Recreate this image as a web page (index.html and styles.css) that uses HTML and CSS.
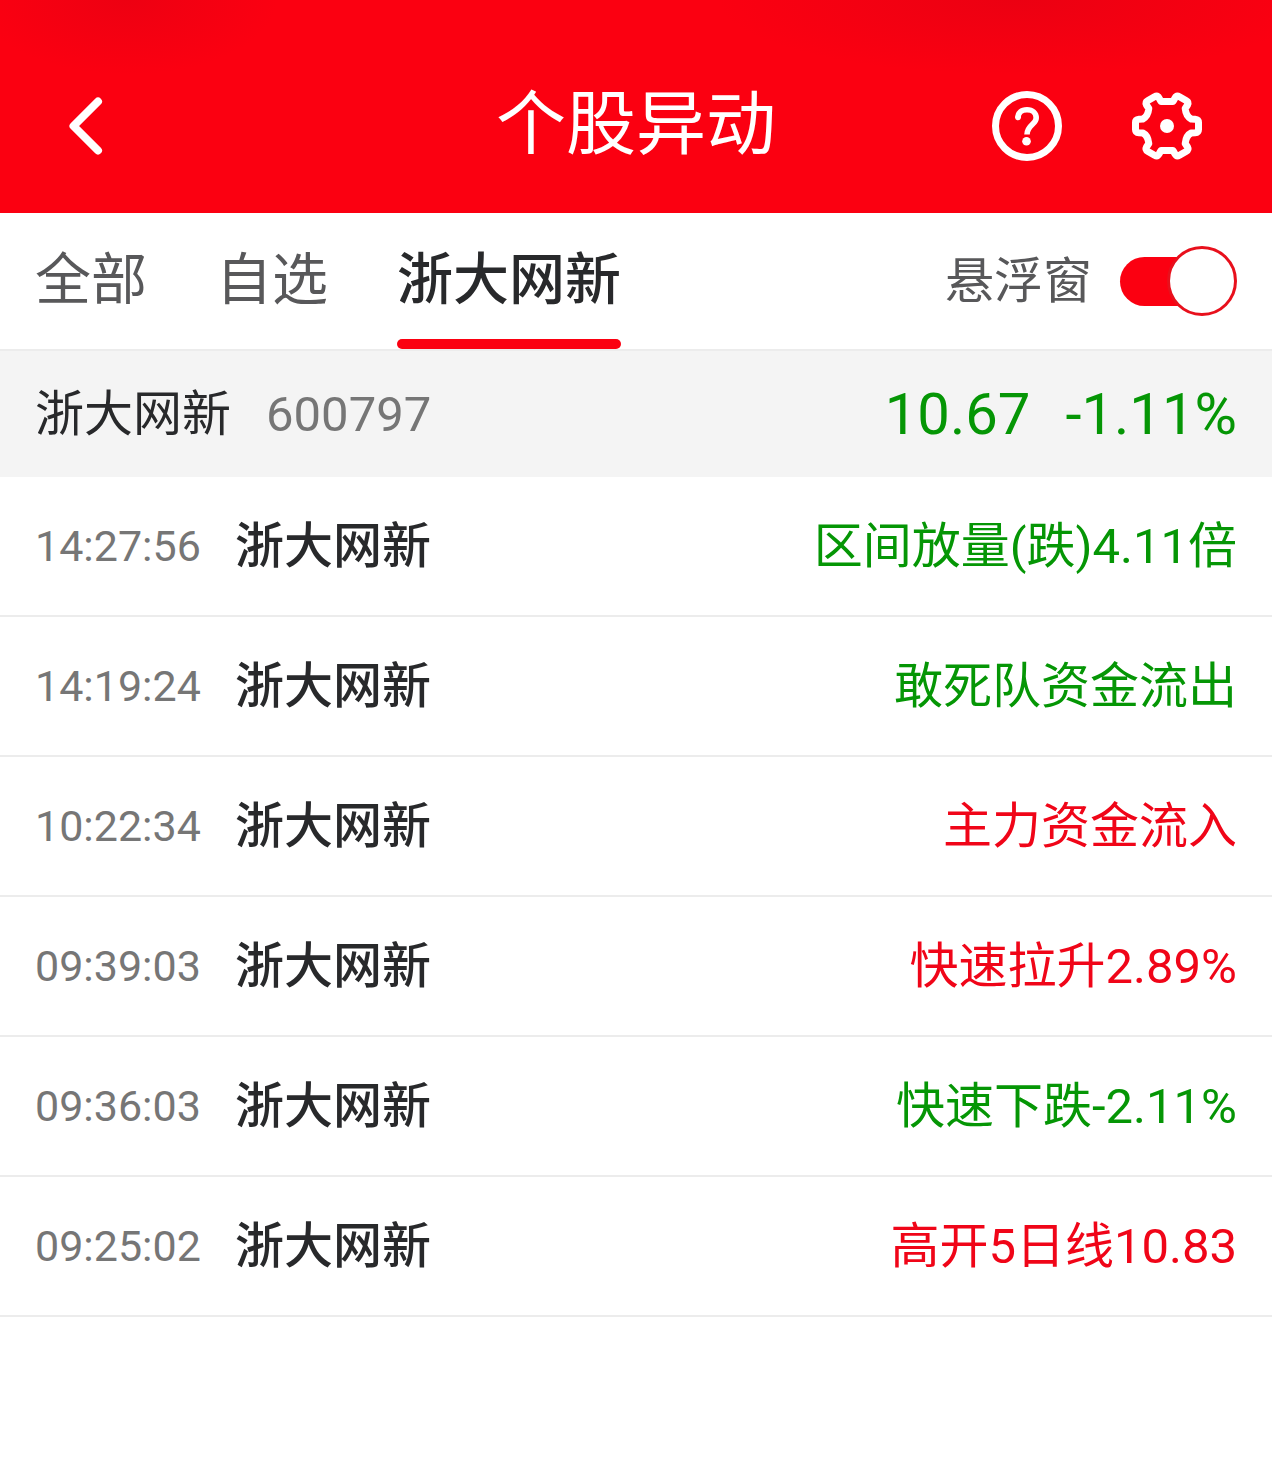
FILE: index.html
```html
<!DOCTYPE html>
<html lang="zh-CN">
<head>
<meta charset="utf-8">
<meta name="viewport" content="width=device-width, initial-scale=1">
<title>个股异动</title>
<link rel="stylesheet" href="styles.css">
</head>
<body>
<header class="topbar">
  <button class="icon-button" type="button" aria-label="返回">
    <svg width="34" height="70" viewBox="0 0 34 70" fill="none" stroke="currentColor" stroke-width="8" stroke-linecap="round" stroke-linejoin="round"><path d="M28 10.500 3.500 35 28 59.500"/></svg>
  </button>
  <h1 class="topbar-title">个股异动</h1>
  <div class="topbar-actions">
    <button class="icon-button" type="button" aria-label="帮助">
      <svg width="70" height="70" viewBox="0 0 70 70" fill="none" stroke="currentColor"><circle cx="35" cy="35" r="31.500" stroke-width="7"/><path d="M26 27C26 21.500 29.500 18.800 35 18.800S44.200 22 44.200 27C44.200 33.500 35 34 35 43.500" stroke-width="5.600"/><circle cx="26" cy="26.500" r="2.800" fill="currentColor" stroke="none"/><circle cx="34.500" cy="50.200" r="4.300" fill="currentColor" stroke="none"/></svg>
    </button>
    <button class="icon-button" type="button" aria-label="设置">
      <svg width="70" height="70" viewBox="0 0 70 70" fill="none" stroke="currentColor" stroke-width="7" stroke-linejoin="round"><path d="M29 10.500H41L43 7Q44.600 4.200 47.500 5.800L54 9.500Q57 11.200 55.500 14L53.200 17.500Q54 25.500 59.200 28L63 28.200Q66.500 28.500 66.500 31.500V38.500Q66.500 41.500 63 41.800L59.200 42Q54 44.500 53.200 52.500L55.500 56Q57 58.800 54 60.500L47.500 64.200Q44.600 65.800 43 63L41 59.500H29L27 63Q25.400 65.800 22.500 64.200L16 60.500Q13 58.800 14.500 56L16.800 52.500Q16 44.500 10.800 42L7 41.800Q3.500 41.500 3.500 38.500V31.500Q3.500 28.500 7 28.200L10.800 28Q16 25.500 16.800 17.500L14.500 14Q13 11.200 16 9.500L22.500 5.800Q25.400 4.200 27 7Z"/><circle cx="35" cy="35" r="7" fill="currentColor" stroke="none"/></svg>
    </button>
  </div>
</header>

<nav class="tabs">
  <button class="tab" type="button">全部</button>
  <button class="tab" type="button">自选</button>
  <button class="tab tab-active" type="button" aria-current="page">浙大网新</button>
  <label class="float-label">悬浮窗
    <input class="switch" type="checkbox" role="switch" checked>
  </label>
</nav>

<main>
  <section class="quote">
    <h2 class="quote-name">浙大网新</h2>
    <span class="quote-code">600797</span>
    <span class="quote-price">10.67</span>
    <span class="quote-change">-1.11%</span>
  </section>
  <ol class="events">
    <li class="event"><time class="event-time">14:27:56</time><span class="event-name">浙大网新</span><span class="event-text down">区间放量(跌)4.11倍</span></li>
    <li class="event"><time class="event-time">14:19:24</time><span class="event-name">浙大网新</span><span class="event-text down">敢死队资金流出</span></li>
    <li class="event"><time class="event-time">10:22:34</time><span class="event-name">浙大网新</span><span class="event-text up">主力资金流入</span></li>
    <li class="event"><time class="event-time">09:39:03</time><span class="event-name">浙大网新</span><span class="event-text up">快速拉升2.89%</span></li>
    <li class="event"><time class="event-time">09:36:03</time><span class="event-name">浙大网新</span><span class="event-text down">快速下跌-2.11%</span></li>
    <li class="event"><time class="event-time">09:25:02</time><span class="event-name">浙大网新</span><span class="event-text up">高开5日线10.83</span></li>
  </ol>
</main>
</body>
</html>
```
FILE: styles.css
```css
*,
*::before,
*::after {
  box-sizing: border-box;
}

body {
  margin: 0;
  background: #fff;
  color: #28292b;
  font-family: Roboto, "Noto Sans CJK SC", sans-serif;
  font-size: 49px;
  line-height: 1;
}

button {
  padding: 0;
  border: 0;
  background: none;
  color: inherit;
  font: inherit;
  cursor: pointer;
}

h1,
h2 {
  margin: 0;
  font-size: inherit;
  font-weight: 400;
}

.topbar {
  display: grid;
  grid-template-columns: 1fr auto 1fr;
  align-items: center;
  height: 213px;
  padding: 39px 70px 0;
  color: #fff;
  background:
    radial-gradient(ellipse 150px 75px at 10% 0, rgba(190, 0, 20, 0.22), transparent),
    radial-gradient(ellipse 300px 75px at 80% 0, rgba(190, 0, 20, 0.25), transparent),
    #fb0011;
}

.topbar-title {
  padding-bottom: 2px;
  font-size: 70px;
}

.topbar-actions {
  display: flex;
  justify-content: flex-end;
  gap: 70px;
}

.icon-button {
  justify-self: start;
}

.icon-button svg {
  display: block;
  overflow: visible;
}

.tabs {
  display: flex;
  align-items: stretch;
  gap: 69px;
  height: 138px;
  padding: 0 35px;
  border-bottom: 2px solid #ececec;
}

.tab {
  display: flex;
  flex-direction: column;
  color: #58585a;
  font-size: 56px;
  line-height: 126px;
  padding-top: 4px;
}

.tab-active {
  color: #28292b;
  font-weight: 500;
}

.tab-active::after {
  content: "";
  width: 100%;
  height: 10px;
  margin-top: -4px;
  border-radius: 5px;
  background: #fb0011;
}

.float-label {
  display: flex;
  align-items: center;
  gap: 28px;
  margin-left: auto;
  color: #58585a;
}

.switch {
  appearance: none;
  display: flex;
  align-items: center;
  width: 117px;
  height: 70px;
  margin: 0;
  cursor: pointer;
}

.switch::before {
  content: "";
  width: 80px;
  height: 49px;
  border-radius: 25px 0 0 25px;
  background: #fb0011;
}

.switch::after {
  content: "";
  flex: none;
  width: 70px;
  height: 70px;
  margin-left: -33px;
  border: 3px solid #e8101c;
  border-radius: 50%;
  background: #fff;
}

.quote {
  display: flex;
  align-items: center;
  gap: 35px;
  height: 126px;
  padding: 0 35px;
  background: #f4f4f4;
}

.quote-code {
  color: #767676;
}

.quote-price,
.quote-change {
  color: #059605;
  font-size: 58px;
}

.quote-price {
  margin-left: auto;
}

.events {
  margin: 0;
  padding: 0;
  list-style: none;
}

.event {
  display: flex;
  align-items: center;
  height: 140px;
  padding: 0 35px;
  border-bottom: 2px solid #ececec;
}

.event-time {
  width: 200px;
  color: #767676;
  font-size: 43px;
}

.event-name {
  font-weight: 500;
}

.event-text {
  margin-left: auto;
}

.up {
  color: #f00518;
}

.down {
  color: #059605;
}
```
